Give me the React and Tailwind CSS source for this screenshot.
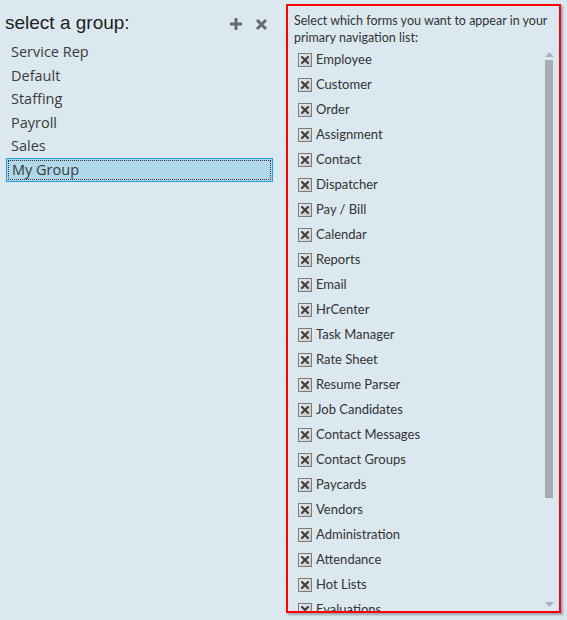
import { useState } from 'react'

const groups = ['Service Rep', 'Default', 'Staffing', 'Payroll', 'Sales', 'My Group']

const forms = [
  'Employee', 'Customer', 'Order', 'Assignment', 'Contact', 'Dispatcher', 'Pay / Bill',
  'Calendar', 'Reports', 'Email', 'HrCenter', 'Task Manager', 'Rate Sheet', 'Resume Parser',
  'Job Candidates', 'Contact Messages', 'Contact Groups', 'Paycards', 'Vendors',
  'Administration', 'Attendance', 'Hot Lists', 'Evaluations',
]

const CheckBox = () => (
  <span className="w-[14px] h-[14px] border border-[#7b7b7b] bg-gradient-to-br from-[#e9e9e9] to-[#c9c9c9] flex items-center justify-center shrink-0">
    <svg width="8" height="8" viewBox="0 0 8 8">
      <path d="M1 1 L7 7 M7 1 L1 7" stroke="#3d3d3d" strokeWidth="2" strokeLinecap="square" />
    </svg>
  </span>
)

const App = () => {
  const [selected, setSelected] = useState('My Group')

  return (
    <div className="w-[567px] h-[620px] bg-[#dbe8f0] flex overflow-hidden font-['Open_Sans',sans-serif]">
      {/* group list */}
      <div className="w-[286px] shrink-0 pt-[10px]">
        <div className="flex items-center pl-[5px] pr-[18px] h-[26px]">
          <span className="flex-1 text-[19px] text-[#222] font-['Liberation_Sans',Arial,sans-serif]">select a group:</span>
          <svg width="14" height="14" viewBox="0 0 14 14" className="mr-[12px] mt-[2px]">
            <path d="M7 1 V13 M1 7 H13" stroke="#6a6a6a" strokeWidth="3" />
          </svg>
          <svg width="13" height="13" viewBox="0 0 13 13" className="mt-[2px]">
            <path d="M2 2 L11 11 M11 2 L2 11" stroke="#6a6a6a" strokeWidth="3" />
          </svg>
        </div>
        <div className="mt-[4px] pl-[6px] w-[273px]">
          {groups.map(g => (
            <div
              key={g}
              onClick={() => setSelected(g)}
              className={`h-[23.6px] flex items-center pl-[5px] text-[14.5px] text-[#3b3b3b] ${
                selected === g ? 'bg-[#b1d8ea] border border-[#1ea0e0] outline outline-1 outline-dotted outline-[#333] -outline-offset-[3px] pl-[4px]' : ''
              }`}
            >
              {g}
            </div>
          ))}
        </div>
      </div>

      {/* forms panel */}
      <div className="mt-[4px] w-[275px] h-[609px] border-2 border-[#ff0000] shadow-[2px_2px_2px_rgba(110,120,130,0.6)] flex flex-col overflow-hidden font-['Lato',sans-serif]">
        <p className="pl-[6px] pt-[6px] text-[12.5px] leading-[17px] text-[#333] whitespace-nowrap">
          Select which forms you want to appear in your
          <br />
          primary navigation list:
        </p>
        <div className="flex flex-1 min-h-0 mt-[1px]">
          <div className="flex-1 overflow-hidden pl-[10px]">
            {forms.map(f => (
              <div key={f} className="h-[25px] flex items-center gap-[4px] text-[13px] text-[#333]">
                <CheckBox />
                <span>{f}</span>
              </div>
            ))}
          </div>
          <div className="w-[20px] flex flex-col items-center pt-[5px] pb-[4px] shrink-0">
            <svg width="9" height="5" viewBox="0 0 9 5"><path d="M0 5 L4.5 0 L9 5 Z" fill="#a9b2b8" /></svg>
            <div className="w-[8px] h-[438px] bg-[#a5acb1] mt-[3px]" />
            <div className="flex-1" />
            <svg width="9" height="5" viewBox="0 0 9 5"><path d="M0 0 L4.5 5 L9 0 Z" fill="#a9b2b8" /></svg>
          </div>
        </div>
      </div>
    </div>
  )
}

export default App
